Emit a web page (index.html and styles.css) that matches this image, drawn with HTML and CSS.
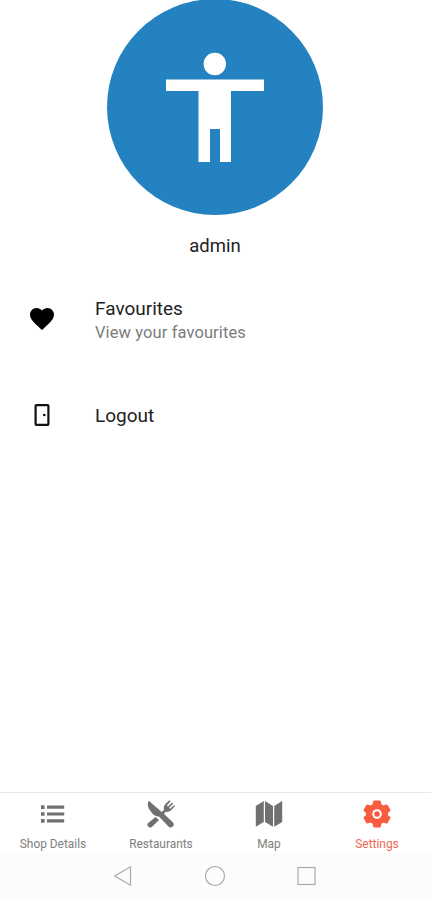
FILE: index.html
```html
<!DOCTYPE html>
<html lang="en">
<head>
<meta charset="utf-8">
<title>Settings</title>
<link rel="stylesheet" href="styles.css">
</head>
<body>
<main class="content">
  <section class="profile">
    <div class="avatar">
      <svg viewBox="0 0 216 216" fill="#fff"><circle cx="107.800" cy="65" r="11.200"/><path d="M59 80.600H157V92H124V163H113V130H103V163H91.500V92H59Z"/></svg>
    </div>
    <div class="name">admin</div>
  </section>
  <section class="menu">
    <a class="row favourites">
      <svg class="heart" viewBox="2 3 20 18.350"><path d="M12 21.350l-1.450-1.320C5.400 15.360 2 12.280 2 8.500 2 5.420 4.420 3 7.500 3c1.740 0 3.410.81 4.500 2.090C13.090 3.810 14.760 3 16.500 3 19.580 3 22 5.420 22 8.500c0 3.780-3.400 6.860-8.550 11.540z"/></svg>
      <div><div class="label">Favourites</div><div class="detail">View your favourites</div></div>
    </a>
    <a class="row logout">
      <svg class="door" viewBox="0 0 16 22"><rect x="1.600" y="1.200" width="12.800" height="19.600" rx=".8" fill="none" stroke="#111" stroke-width="2.200"/><circle cx="10.300" cy="11" r="1.300"/></svg>
      <div class="label">Logout</div>
    </a>
  </section>
</main>
<nav class="tabs">
  <a class="tab"><svg viewBox="0 0 28 28"><path d="M2 5.300h3.600v3.600H2zM8 5.500h17.200v3.200H8zM2 12.200h3.600v3.600H2zM8 12.400h17.200v3.200H8zM2 19.100h3.600v3.600H2zM8 19.300h17.200v3.200H8z"/></svg><span>Shop Details</span></a>
  <a class="tab"><svg viewBox="0 0 28 28"><path d="M1.800 .8C.4 3 .4 6.500 2.800 10C4.800 13.200 7 15.800 10 16.200L12.200 16.800L21.500 26.500C22.800 27.800 24.500 27.600 25.800 26.400C27.100 25.100 27.100 23.500 25.800 22.200L17.300 14.200Z"/><path d="M8.500 16.900L1.200 23C0 24.100.1 25.500 1.200 26.600C2.400 27.800 3.900 27.900 5.100 26.700L12 19.900Z"/><path d="M13.800 13L17 9.800C16.400 7 17.200 5.200 18.700 3.700L22.400 .2L23.600 1.300L19.900 5.500L21 6.600L25 2.600L26.100 3.700L22.100 7.700L23.200 8.800L27.200 4.900L28 6L24.600 9.800C22.900 11.600 21 12.300 18.700 11.800L16.200 15Z"/></svg><span>Restaurants</span></a>
  <a class="tab"><svg viewBox="0 0 28 28"><path d="M.8 5.900L8.800 1V21.900L.8 26.800ZM10 1L18 5.900V26.800L10 21.900ZM19.200 5.900L27.200 1V21.900L19.200 26.800Z"/></svg><span>Map</span></a>
  <a class="tab active"><svg viewBox="0 0 28 28"><path stroke="currentColor" stroke-width="2" stroke-linejoin="round" d="M11.200 1.500H16.800L17.500 4.800L20.500 6.500L23.700 5.400L26.500 10.200L24 12.400V15.600L26.500 17.800L23.700 22.600L20.500 21.500L17.500 23.200L16.800 26.500H11.200L10.500 23.200L7.500 21.500L4.300 22.600L1.500 17.800L4 15.600V12.400L1.500 10.200L4.300 5.400L7.500 6.500L10.500 4.800Z"/><circle cx="14" cy="14" r="3.800" fill="none" stroke="#fff" stroke-width="2"/></svg><span>Settings</span></a>
</nav>
<footer class="system">
  <svg viewBox="0 0 20 20"><path d="M17.500 .8V19.200L1.700 10Z"/></svg>
  <svg viewBox="0 0 20 20"><circle cx="10" cy="10" r="9.500"/></svg>
  <svg viewBox="0 0 20 20"><rect x="1" y="1.500" width="17" height="17"/></svg>
</footer>
</body>
</html>
```
FILE: styles.css
```css
* { box-sizing: border-box; }
body {
  margin: 0;
  height: 900px;
  display: flex;
  flex-direction: column;
  overflow: hidden;
  background: #fff;
  color: #222;
  font-family: Roboto, "Liberation Sans", sans-serif;
}
svg { display: block; flex: none; overflow: visible; }
.content { flex: 1; min-height: 0; }
.profile { display: flex; flex-direction: column; align-items: center; margin-right: 1px; }
.avatar {
  width: 216px;
  height: 216px;
  margin-top: -0.6px;
  border-radius: 50%;
  background: #2382bf;
}
.name { margin-top: 18.600px; line-height: 24px; font-size: 18.500px; }
.menu { padding-top: 39px; }
.row { display: grid; grid-template-columns: 65px 1fr; align-items: center; padding-left: 30px; }
.favourites { height: 48px; }
.logout { height: 48px; margin-top: 47px; }
.heart { width: 24px; height: 22px; margin-top: -5px; }
.door { width: 16px; height: 22px; margin: -2px 0 0 4px; }
.label { font-size: 19px; line-height: 24px; }
.detail { font-size: 16.500px; line-height: 24px; color: #7c7c7c; letter-spacing: .1px; }
.tabs {
  height: 61px;
  display: grid;
  grid-template-columns: repeat(4, 108px);
  border-top: 1px solid #e8e8e8;
  margin-left: -1px;
}
.tab {
  display: flex;
  flex-direction: column;
  align-items: center;
  padding-top: 7px;
  color: #707070;
  font-size: 11.900px;
}
.tab svg { width: 28px; height: 28px; fill: currentColor; }
.tab span { margin-top: 8px; line-height: 16px; color: #808080; }
.tab.active { color: #f95c40; }
.tab.active span { color: #ef6552; }
.system {
  height: 47px;
  display: flex;
  justify-content: center;
  gap: 72px;
  padding: 13px 1px 0 0;
  background: #fcfcfc;
}
.system svg { width: 20px; height: 20px; fill: none; stroke: #ababab; stroke-width: 1.200; }
```
